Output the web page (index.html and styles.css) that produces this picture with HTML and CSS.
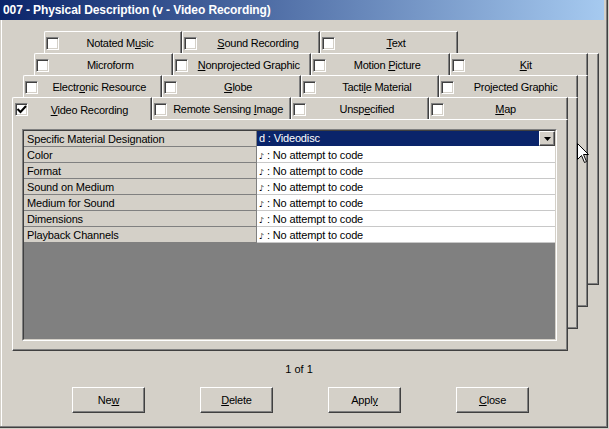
FILE: index.html
```html
<!DOCTYPE html>
<html>
<head>
<meta charset="utf-8">
<title>007 - Physical Description</title>
<link rel="stylesheet" href="styles.css">
</head>
<body>
<div class="window">
  <div class="titlebar">007 - Physical Description (v - Video Recording)</div>

  <div class="stack">
    <div class="layer l3">
      <div class="tabs">
        <div class="tab"><span class="cb"></span><span class="tl">Notated M<u>u</u>sic</span></div>
        <div class="tab"><span class="cb"></span><span class="tl"><u>S</u>ound Recording</span></div>
        <div class="tab"><span class="cb"></span><span class="tl"><u>T</u>ext</span></div>
      </div>
      <div class="panel"></div>
    </div>

    <div class="layer l2">
      <div class="tabs">
        <div class="tab"><span class="cb"></span><span class="tl">Microform</span></div>
        <div class="tab"><span class="cb"></span><span class="tl"><u>N</u>onprojected Graphic</span></div>
        <div class="tab"><span class="cb"></span><span class="tl">Motion <u>P</u>icture</span></div>
        <div class="tab"><span class="cb"></span><span class="tl"><u>K</u>it</span></div>
      </div>
      <div class="panel"></div>
    </div>

    <div class="layer l1">
      <div class="tabs">
        <div class="tab"><span class="cb"></span><span class="tl">Electr<u>o</u>nic Resource</span></div>
        <div class="tab"><span class="cb"></span><span class="tl"><u>G</u>lobe</span></div>
        <div class="tab"><span class="cb"></span><span class="tl">Tacti<u>l</u>e Material</span></div>
        <div class="tab"><span class="cb"></span><span class="tl">Pro<u>j</u>ected Graphic</span></div>
      </div>
      <div class="panel"></div>
    </div>

    <div class="layer l0">
      <div class="tabs">
        <div class="tab sel"><span class="cb"><svg width="11" height="11" viewBox="0 0 11 11"><path d="M1.5 5 L4.5 8 L10 2" fill="none" stroke="#000" stroke-width="2"/></svg></span><span class="tl"><u>V</u>ideo Recording</span></div>
        <div class="tab"><span class="cb"></span><span class="tl">Remote Sensing <u>I</u>mage</span></div>
        <div class="tab"><span class="cb"></span><span class="tl">Unsp<u>e</u>cified</span></div>
        <div class="tab"><span class="cb"></span><span class="tl"><u>M</u>ap</span></div>
      </div>
      <div class="panel">
        <div class="frame">
          <div class="grid">
            <div class="row">
              <div class="lab">Specific Material Designation</div>
              <div class="val combo"><span class="seltext">d : Videodisc</span><span class="dd"><svg width="7" height="4" viewBox="0 0 7 4"><path d="M0 0 H7 L3.5 4 Z" fill="#000"/></svg></span></div>
            </div>
            <div class="row"><div class="lab">Color</div><div class="val"><span class="fill">♪</span> : No attempt to code</div></div>
            <div class="row"><div class="lab">Format</div><div class="val"><span class="fill">♪</span> : No attempt to code</div></div>
            <div class="row"><div class="lab">Sound on Medium</div><div class="val"><span class="fill">♪</span> : No attempt to code</div></div>
            <div class="row"><div class="lab">Medium for Sound</div><div class="val"><span class="fill">♪</span> : No attempt to code</div></div>
            <div class="row"><div class="lab">Dimensions</div><div class="val"><span class="fill">♪</span> : No attempt to code</div></div>
            <div class="row"><div class="lab">Playback Channels</div><div class="val"><span class="fill">♪</span> : No attempt to code</div></div>
          </div>
        </div>
      </div>
    </div>
  </div>

  <div class="pager">1 of 1</div>

  <div class="buttons">
    <div class="btn">Ne<u>w</u></div>
    <div class="btn"><u>D</u>elete</div>
    <div class="btn">Appl<u>y</u></div>
    <div class="btn"><u>C</u>lose</div>
  </div>

  <svg class="cursor" width="13" height="21" viewBox="0 0 13 21"><path d="M0.5 0.5 L0.5 16.5 L4.5 12.5 L7.5 19.5 L9.5 18.5 L6.5 11.5 L11.5 11.5 Z" fill="#fff" stroke="#000" stroke-width="1"/></svg>
</div>
</body>
</html>
```

FILE: styles.css
```css
* { box-sizing: border-box; margin: 0; padding: 0; }

body {
  width: 609px;
  height: 429px;
  overflow: hidden;
  background: #d4d0c8;
  font-family: "Liberation Sans", Arial, sans-serif;
  font-size: 11px;
  color: #000;
}

.window {
  position: relative;
  width: 608px;
  height: 428px;
  background: #d4d0c8;
  border-right: 1px solid #404040;
  border-bottom: 1px solid #404040;
  box-shadow: inset -1px -1px 0 #808080, inset 1px 0 0 #d4d0c8, inset 2px 0 0 #fff;
  display: flex;
  flex-direction: column;
}

.titlebar {
  height: 20px;
  margin-right: 3px;
  padding-left: 3px;
  line-height: 20px;
  background: linear-gradient(to right, #0a246a, #a6caf0);
  color: #fff;
  font-weight: bold;
  font-size: 12px;
  letter-spacing: -0.1px;
  white-space: nowrap;
}

.stack {
  display: grid;
  width: 587px;
  height: 320px;
  margin: 11px 0 0 12px;
}

.layer {
  grid-area: 1 / 1;
  display: flex;
  flex-direction: column;
  width: 555px;
  height: 254px;
}
.l3 { margin-left: 32px; margin-top: 0; }
.l2 { margin-left: 22px; margin-top: 22px; width: 554px; }
.l1 { margin-left: 11px; margin-top: 44px; }
.l0 { margin-left: 0; margin-top: 66px; width: 556px; }

.tabs {
  display: flex;
  height: 22px;
  flex: none;
}

.tab {
  flex: 1;
  display: flex;
  align-items: center;
  padding: 1px 0 0 1px;
  background: #d4d0c8;
  border-left: 1px solid #fff;
  border-top: 1px solid #fff;
  border-right: 1px solid #404040;
  border-top-left-radius: 2px;
  box-shadow: inset -1px 0 0 #808080;
}
.l3 .tab { flex: 0 0 138px; }

.tab.sel {
  position: relative;
  z-index: 1;
  margin-bottom: -1px;
  padding-left: 2px;
}

.cb {
  flex: none;
  width: 13px;
  height: 13px;
  background: #fff;
  border: 1px solid;
  border-color: #808080 #fff #fff #808080;
  display: flex;
  align-items: center;
  justify-content: center;
  box-shadow: inset 1px 1px 0 #404040, inset -1px -1px 0 #d4d0c8;
}

.tl {
  flex: 1;
  text-align: center;
  white-space: nowrap;
  letter-spacing: -0.25px;
}

.panel {
  flex: 1;
  background: #d4d0c8;
  border-left: 1px solid #fff;
  border-top: 1px solid #fff;
  border-right: 1px solid #404040;
  border-bottom: 1px solid #404040;
  box-shadow: inset -1px -1px 0 #808080;
}
.l0 .panel { padding: 9px 10px 8px 9px; }

.frame {
  height: 212px;
  border: 1px solid;
  border-color: #808080 #fff #fff #808080;
}
.grid {
  height: 100%;
  background: #808080;
  border: 1px solid;
  border-color: #404040 #d4d0c8 #d4d0c8 #404040;
}

.row {
  display: flex;
  height: 16px;
}
.lab {
  width: 233px;
  flex: none;
  padding-left: 3px;
  line-height: 16px;
  background: #d4d0c8;
  border-right: 1px solid #808080;
  border-bottom: 1px solid #808080;
  white-space: nowrap;
  letter-spacing: -0.15px;
}
.val {
  flex: 1;
  padding-left: 2px;
  line-height: 16px;
  background: #fff;
  border-bottom: 1px solid #c8c8c8;
  white-space: nowrap;
  letter-spacing: -0.15px;
}
.fill {
  font-family: "DejaVu Sans", sans-serif;
  font-size: 8px;
  letter-spacing: 0;
}
.val.combo {
  display: flex;
  padding: 0;
  border-bottom: 1px solid #fff;
}
.seltext {
  flex: 1;
  background: #0a246a;
  color: #fff;
  padding-left: 2px;
  line-height: 15px;
}
.dd {
  flex: none;
  width: 16px;
  display: flex;
  align-items: center;
  justify-content: center;
  background: #d4d0c8;
  border: 1px solid;
  border-color: #fff #404040 #404040 #fff;
  box-shadow: inset -1px -1px 0 #808080;
}

.pager {
  width: 598px;
  margin-top: 11px;
  text-align: center;
  line-height: 15px;
}

.buttons {
  display: flex;
  gap: 55px;
  margin: 10px 0 0 72px;
}
.btn {
  width: 73px;
  height: 26px;
  display: flex;
  align-items: center;
  justify-content: center;
  border: 1px solid;
  border-color: #fff #404040 #404040 #fff;
  box-shadow: inset -1px -1px 0 #808080;
  letter-spacing: -0.2px;
}

.cursor {
  position: absolute;
  left: 577px;
  top: 143px;
}
```
